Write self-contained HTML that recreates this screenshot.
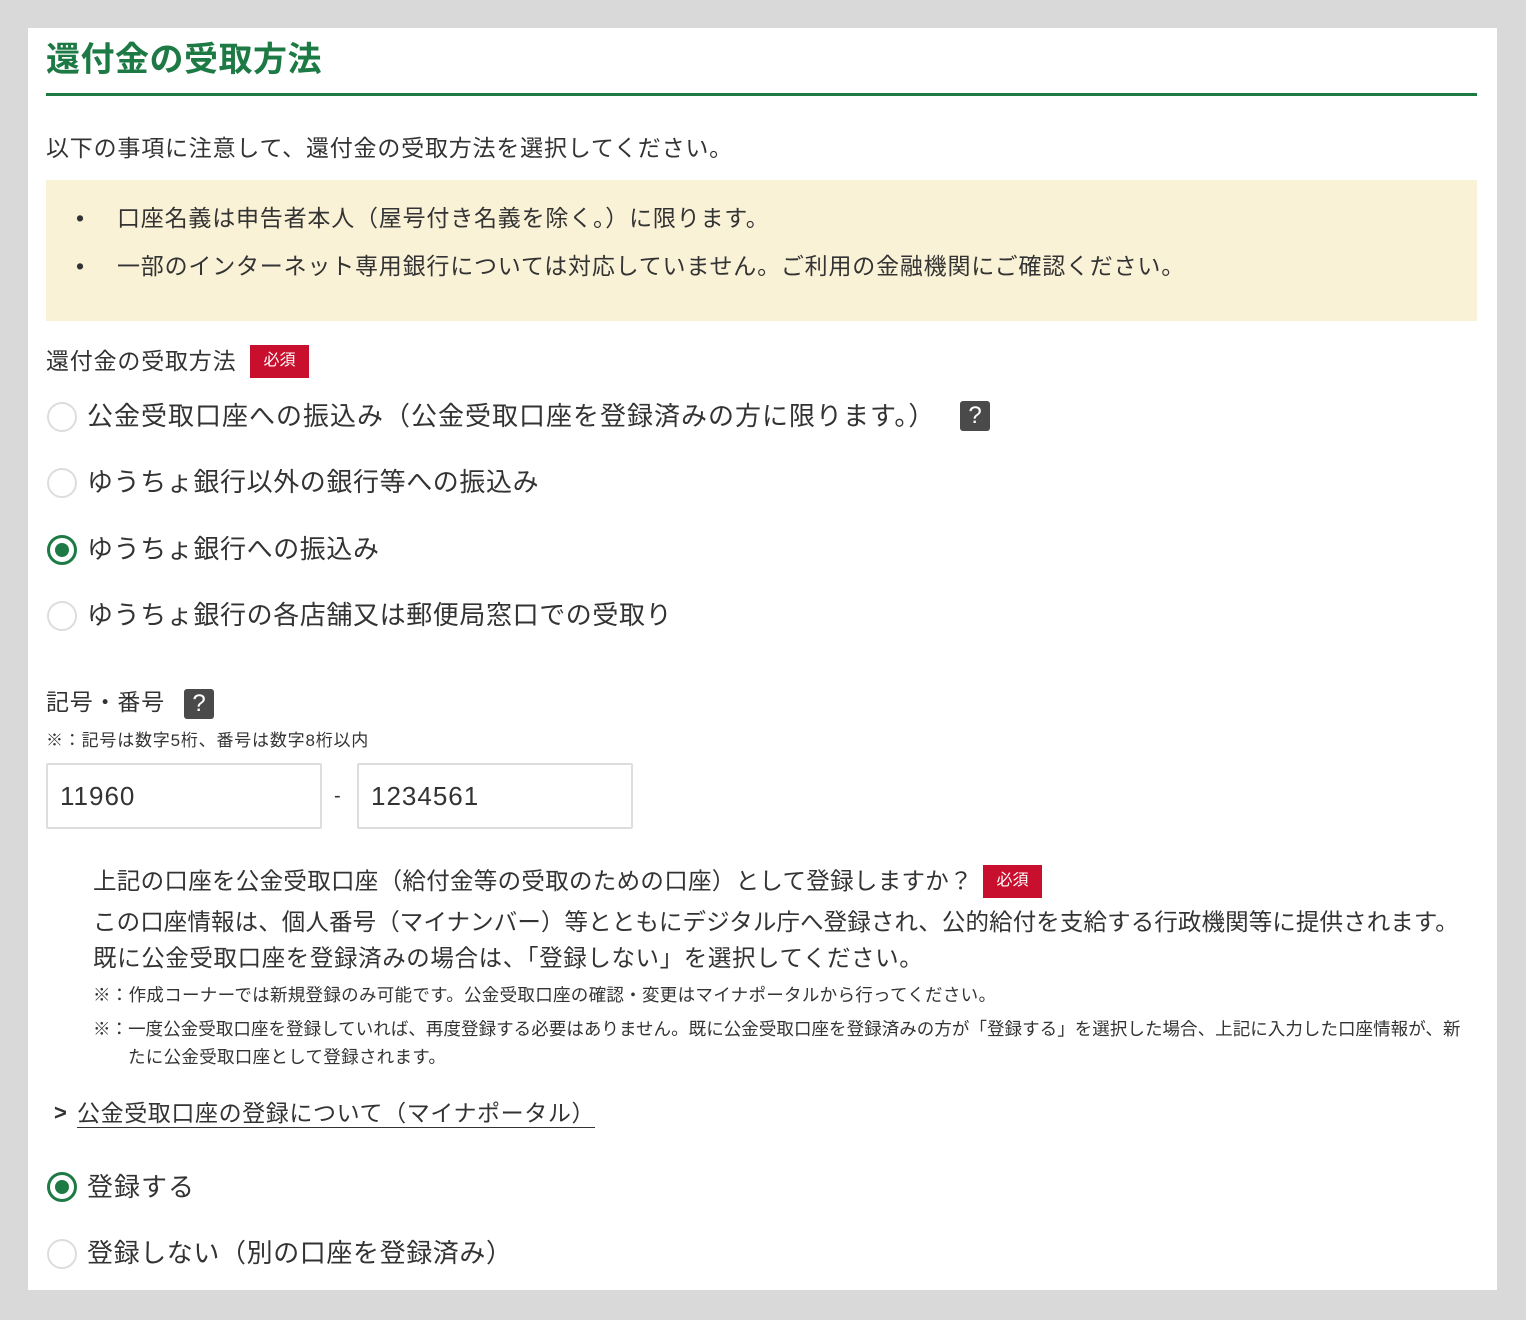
<!DOCTYPE html>
<html><head><meta charset="utf-8"><style>
*{margin:0;padding:0;box-sizing:border-box}
body{width:1526px;height:1320px;background:#d9d9d9;position:relative;overflow:hidden;font-family:"Liberation Sans","Noto Sans CJK JP",sans-serif;color:#333}
.panel{position:absolute;left:28px;top:28px;width:1469px;height:1262px;background:#fff}
.t{position:absolute;white-space:nowrap;line-height:1;letter-spacing:0.8px}
.radio{position:absolute;left:47px;width:30px;height:30px;border-radius:50%;border:2px solid #ddd;background:#fff}
.radio.on{border:3px solid #1e7a45}
.radio.on::after{content:"";position:absolute;left:5px;top:5px;width:14px;height:14px;border-radius:50%;background:#1e7a45}
.q{position:absolute;width:30px;height:30px;background:#4a4a4a;border-radius:3px;color:#fff;font-size:24px;text-align:center;line-height:30px}
.req{position:absolute;background:#c8102e;color:#fff;font-size:16px;text-align:center;line-height:32px;width:59px;height:33px}
.inp{position:absolute;top:763px;height:66px;width:276px;border:2px solid #ddd;border-radius:2px;font-size:26px;padding-left:12px;line-height:62px;color:#333;letter-spacing:1px}
</style></head><body>
<div class="panel"></div>
<div class="t" style="left:46px;top:43px;font-size:34px;font-weight:bold;color:#1e7a45;letter-spacing:0.5px">還付金の受取方法</div>
<div style="position:absolute;left:46px;top:93px;width:1431px;height:3px;background:#1e7a45"></div>
<div class="t" style="left:46px;top:137px;font-size:23px">以下の事項に注意して、還付金の受取方法を選択してください。</div>
<div style="position:absolute;left:46px;top:180px;width:1431px;height:141px;background:#faf2d7"></div>
<div class="t" style="left:76px;top:207px;font-size:23px">•</div>
<div class="t" style="left:117px;top:207px;font-size:23px">口座名義は申告者本人（屋号付き名義を除く。）に限ります。</div>
<div class="t" style="left:76px;top:255px;font-size:23px">•</div>
<div class="t" style="left:117px;top:255px;font-size:23px">一部のインターネット専用銀行については対応していません。ご利用の金融機関にご確認ください。</div>
<div class="t" style="left:46px;top:350px;font-size:23px">還付金の受取方法</div>
<div class="req" style="left:250px;top:345px">必須</div>
<div class="radio" style="top:402px"></div>
<div class="t" style="left:87px;top:403px;font-size:26px;letter-spacing:1px">公金受取口座への振込み（公金受取口座を登録済みの方に限ります。）</div>
<div class="q" style="left:960px;top:401px">?</div>
<div class="radio" style="top:468px"></div>
<div class="t" style="left:87px;top:469px;font-size:26px;letter-spacing:0.6px">ゆうちょ銀行以外の銀行等への振込み</div>
<div class="radio on" style="top:535px"></div>
<div class="t" style="left:87px;top:536px;font-size:26px;letter-spacing:0.6px">ゆうちょ銀行への振込み</div>
<div class="radio" style="top:601px"></div>
<div class="t" style="left:87px;top:602px;font-size:26px;letter-spacing:0.6px">ゆうちょ銀行の各店舗又は郵便局窓口での受取り</div>
<div class="t" style="left:46px;top:691px;font-size:23px">記号・番号</div>
<div class="q" style="left:184px;top:689px">?</div>
<div class="t" style="left:46px;top:732px;font-size:17px">※：記号は数字5桁、番号は数字8桁以内</div>
<div class="inp" style="left:46px">11960</div>
<div class="t" style="left:334px;top:786px;font-size:20px">-</div>
<div class="inp" style="left:357px">1234561</div>
<div class="t" style="left:93px;top:870px;font-size:23.5px;letter-spacing:0.3px">上記の口座を公金受取口座（給付金等の受取のための口座）として登録しますか？</div>
<div class="req" style="left:983px;top:865px">必須</div>
<div class="t" style="left:93px;top:911px;font-size:23.5px;letter-spacing:0.1px">この口座情報は、個人番号（マイナンバー）等とともにデジタル庁へ登録され、公的給付を支給する行政機関等に提供されます。</div>
<div class="t" style="left:93px;top:947px;font-size:23.5px;letter-spacing:0.6px">既に公金受取口座を登録済みの場合は、「登録しない」を選択してください。</div>
<div class="t" style="left:93px;top:987px;font-size:17.5px;letter-spacing:0.3px">※：作成コーナーでは新規登録のみ可能です。公金受取口座の確認・変更はマイナポータルから行ってください。</div>
<div class="t" style="left:93px;top:1021px;font-size:17.5px;letter-spacing:0.05px">※：一度公金受取口座を登録していれば、再度登録する必要はありません。既に公金受取口座を登録済みの方が「登録する」を選択した場合、上記に入力した口座情報が、新</div>
<div class="t" style="left:128px;top:1049px;font-size:17.5px;letter-spacing:0.3px">たに公金受取口座として登録されます。</div>
<div class="t" style="left:54px;top:1102px;font-size:22px;font-weight:bold">&gt;</div>
<div class="t" style="left:77px;top:1102px;font-size:23px;border-bottom:1.5px solid #333;padding-bottom:2px;letter-spacing:0.6px">公金受取口座の登録について（マイナポータル）</div>
<div class="radio on" style="top:1172px"></div>
<div class="t" style="left:87px;top:1174px;font-size:26px;letter-spacing:1px">登録する</div>
<div class="radio" style="top:1239px"></div>
<div class="t" style="left:87px;top:1240px;font-size:26px;letter-spacing:0.6px">登録しない（別の口座を登録済み）</div>
</body></html>
